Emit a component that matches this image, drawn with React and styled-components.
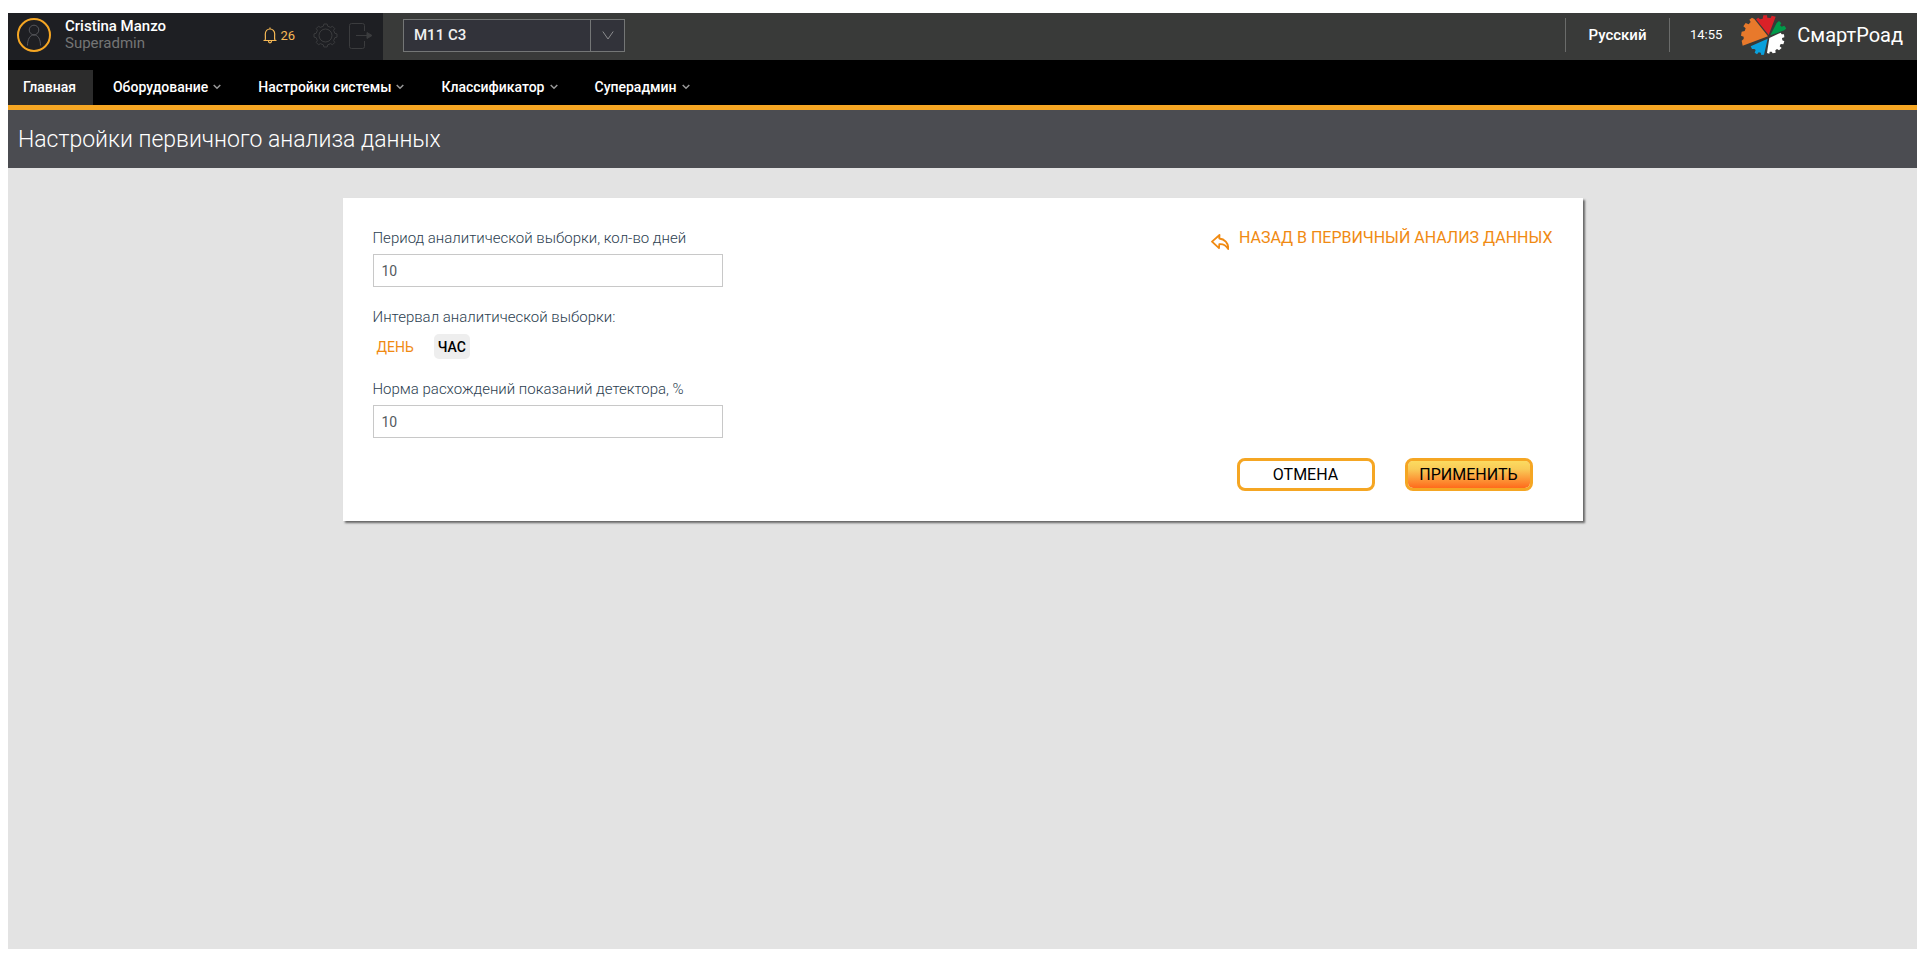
import React, { useState } from "react";
import styled, { createGlobalStyle } from "styled-components";

const GlobalStyle = createGlobalStyle`
  *, *::before, *::after { box-sizing: border-box; }
  html, body, #root { height: 100%; }
  body {
    margin: 0;
    background: #fff;
    font-family: Roboto, "Liberation Sans", sans-serif;
    font-size: 15px;
    line-height: 20px;
    color: #2c3e50;
  }
  button, input, select { font: inherit; margin: 0; }
`;

const Page = styled.div`
  min-height: 100%;
  padding: 13px 9px 12px 8px;
  display: flex;
  flex-direction: column;
`;

const TopBar = styled.header`
  display: flex;
  align-items: stretch;
  height: 47px;
  background: #393a39;
`;

const UserPanel = styled.div`
  flex: 0 0 375px;
  display: flex;
  align-items: center;
  padding: 0 10px 0 9px;
  background: #1e1f23;
`;

const Avatar = styled.span`
  display: flex;
  align-items: center;
  justify-content: center;
  width: 34px;
  height: 34px;
  margin: 0 14px 4px 0;
  border: 2px solid #f5a623;
  border-radius: 50%;
`;

const UserText = styled.div`
  flex: 1;
  display: flex;
  flex-direction: column;
  padding-bottom: 3px;
  line-height: 17px;
`;

const UserName = styled.span`
  font-size: 15px;
  font-weight: 500;
  color: #fff;
`;

const UserRole = styled.span`
  font-size: 15px;
  color: #747575;
`;

const IconButton = styled.button`
  display: flex;
  align-items: center;
  gap: 3px;
  padding: 0;
  margin: 0 0 2px ${(p) => p.$space}px;
  border: 0;
  background: none;
  font-size: 13px;
  line-height: 16px;
  color: ${(p) => p.$color};
  cursor: pointer;
`;

const ObjectPicker = styled.div`
  display: grid;
  grid-template-columns: 1fr 34px;
  align-self: flex-start;
  width: 222px;
  height: 33px;
  margin: 6px 0 0 20px;
  border: 1px solid #747676;
  background: #32333a;
`;

const PickerSelect = styled.select`
  grid-area: 1 / 1 / 2 / 3;
  appearance: none;
  padding: 0 44px 2px 10px;
  border: 0;
  background: transparent;
  color: #f0f0f0;
  font-size: 15px;
  font-weight: 500;
  outline: none;
`;

const PickerArrow = styled.span`
  grid-area: 1 / 2 / 2 / 3;
  display: flex;
  align-items: center;
  justify-content: center;
  border-left: 1px solid #747676;
  pointer-events: none;
`;

const TopRight = styled.div`
  flex: 1;
  display: flex;
  align-items: center;
  justify-content: flex-end;
  padding: 0 14px 4px 0;
  color: #fff;
`;

const LanguageButton = styled.button`
  width: 105px;
  height: 34px;
  padding: 0;
  border: solid #6a6b6a;
  border-width: 0 1px;
  background: none;
  color: #fff;
  font-weight: 500;
  cursor: pointer;
`;

const Clock = styled.time`
  padding: 0 18px 0 20px;
  font-size: 13px;
`;

const Brand = styled.a`
  display: flex;
  align-items: center;
  gap: 11px;
  color: #fff;
  font-size: 20px;
  line-height: 24px;
  text-decoration: none;
`;

const NavBar = styled.nav`
  display: flex;
  padding-top: 10px;
  border-bottom: 5px solid #f5a623;
  background: #000;
`;

const NavLink = styled.a`
  display: flex;
  align-items: center;
  gap: 5px;
  height: 35px;
  padding: 0 17px 2px ${(p) => (p.$active ? 15 : 20)}px;
  background: ${(p) => (p.$active ? "#2c2c2c" : "transparent")};
  color: #fff;
  font-size: 14px;
  font-weight: 500;
  text-decoration: none;
`;

const PageTitle = styled.h1`
  margin: 0;
  padding: 15px 10px 13px;
  background: #4b4c51;
  color: #fff;
  font-size: 23px;
  font-weight: 300;
  line-height: 30px;
`;

const Content = styled.main`
  flex: 1;
  padding-top: 30px;
  background: #e3e3e3;
`;

const Card = styled.form`
  width: 65%;
  max-width: 1240px;
  margin: 0 auto;
  padding: 30px;
  background: #fff;
  box-shadow: 1px 1px 2px 1px #777;
  box-shadow: 2px 2px 2px #666;
`;

const CardTop = styled.div`
  display: flex;
  justify-content: space-between;
  align-items: flex-start;
`;

const Fields = styled.div`
  width: 350px;
  display: flex;
  flex-direction: column;
  gap: 20px;
`;

const Field = styled.div`
  display: flex;
  flex-direction: column;
  gap: 6px;
`;

const fieldLabel = `
  font-size: 15px;
  font-weight: 300;
  white-space: nowrap;
`;

const Label = styled.label`${fieldLabel}`;
const GroupLabel = styled.span`${fieldLabel}`;

const TextInput = styled.input`
  height: 33px;
  padding: 0 8px;
  border: 1px solid #c8c8c8;
  background: #fff;
  color: #555a60;
  font-size: 14px;
  outline: none;
`;

const Switch = styled.div`
  display: flex;
  align-items: flex-end;
  gap: 16px;
  height: 26px;
`;

const SwitchButton = styled.button`
  height: 25px;
  padding: 0 4px;
  border: 0;
  border-radius: 5px;
  background: ${(p) => (p.$on ? "#eee" : "transparent")};
  color: ${(p) => (p.$on ? "#000" : "#f08a12")};
  font-size: 14px;
  font-weight: ${(p) => (p.$on ? 500 : 400)};
  cursor: pointer;
`;

const BackLink = styled.a`
  display: flex;
  gap: 10px;
  color: #f08a12;
  font-size: 16px;
  text-decoration: none;

  svg { margin-top: 6px; }
`;

const Actions = styled.div`
  display: flex;
  justify-content: flex-end;
  gap: 30px;
  padding: 20px 20px 0 0;
`;

const ActionButton = styled.button`
  width: ${(p) => p.$width}px;
  height: 33px;
  padding: 0;
  border: 3px solid #f5a623;
  border-radius: 8px;
  background: ${(p) => (p.$primary ? "linear-gradient(#fbdb60 0%, #f9cb57 30%, #ff6a1c 100%) padding-box" : "#fff")};
  color: #000;
  font-size: 16px;
  cursor: pointer;
`;

const GearLogo = () => (
  <svg width="46" height="41" viewBox="0 0 138 123" aria-hidden="true">
    <path fill="#e8792b" d="M84 67L43 15 36 11 28 17 32 24 26 31 17 27 10 37 17 43 14 51 5 53 3 65 11 68 11 75 5 80 8 95z" />
    <path fill="#da2128" d="M86 63L48 16 55 11 60 16 68 14 70 4 81 4 82 11 92 12 95 5 107 8z" />
    <path fill="#009a49" d="M91 64L110 27 117 21 124 28 120 34 125 38 133 35 139 43 133 49z" />
    <path fill="#fff" d="M88 72L122 56 125 61 132 61 133 70 126 72 127 79 133 82 130 91 122 90 119 97 125 102 117 109 111 105 106 109 107 116 98 118 95 113 89 113 88 119 81 117z" />
    <path fill="#0aa0dc" d="M83 74L72 122 64 123 62 116 56 115 51 121 44 116 47 108 43 105 36 105 32 97z" />
  </svg>
);

const PersonIcon = () => (
  <svg width="16" height="22" viewBox="0 0 16 22" fill="none" stroke="#55565a" aria-hidden="true">
    <circle cx="8" cy="6" r="4.8" />
    <path d="M1.500 21.500C1.500 15 4 11 8 11s6.500 4 6.500 10.500" />
  </svg>
);

const BellIcon = () => (
  <svg width="14" height="17" viewBox="0 0 14 17" fill="none" stroke="currentColor" strokeWidth="1.2" aria-hidden="true">
    <path d="M.5 13.500h13M2 13.300c.8-1 .3-4 .3-6C2.300 4 4.300 2 7 2s4.700 2 4.700 5c0 2-.5 5 .3 6.300M7 .5V2M5.500 14c0 2.500 3 2.500 3 0" />
  </svg>
);

const gearPoints = () => {
  const out = [];
  for (let i = 0; i < 8; i += 1) {
    [[-13, 9.6], [-8, 11.6], [8, 11.6], [13, 9.6]].forEach(([offset, r]) => {
      const a = ((i * 45 + offset) * Math.PI) / 180;
      out.push(`${(12.5 + r * Math.cos(a)).toFixed(2)},${(12.5 + r * Math.sin(a)).toFixed(2)}`);
    });
  }
  return out.join(" ");
};

const SettingsIcon = () => (
  <svg width="25" height="25" viewBox="0 0 25 25" fill="none" stroke="currentColor" strokeLinejoin="round" aria-hidden="true">
    <polygon points={gearPoints()} />
    <circle cx="12.5" cy="12.5" r="6.5" />
  </svg>
);

const LogoutIcon = () => (
  <svg width="25" height="26" viewBox="0 0 25 26" fill="none" stroke="currentColor" aria-hidden="true">
    <path d="M16.500 8V2.500a2 2 0 0 0-2-2h-11a2 2 0 0 0-2 2v21a2 2 0 0 0 2 2h11a2 2 0 0 0 2-2V18M8 12.500h13" />
    <path d="M19 9.500l5 3-5 3z" fill="currentColor" />
  </svg>
);

const NavChevron = () => (
  <svg width="8" height="6" viewBox="0 0 8 6" fill="none" stroke="#999" strokeWidth="1.5" aria-hidden="true">
    <path d="M.7 1L4 4.300 7.300 1" />
  </svg>
);

const PickerChevron = () => (
  <svg width="12" height="9" viewBox="0 0 12 9" fill="none" stroke="#8b8c8e" aria-hidden="true">
    <path d="M.8.500L6 8 11.200.5" />
  </svg>
);

const BackIcon = () => (
  <svg width="18" height="16" viewBox="0 0 18 16" fill="none" stroke="currentColor" strokeWidth="1.8" strokeLinejoin="round" aria-hidden="true">
    <path d="M8.500 1L1 7.700l7 6.500.3-4c3.500-.4 6.500 1 8.900 4.800.3-6-3.700-10-8.900-10.500z" />
  </svg>
);

const menu = [
  { title: "Главная", active: true },
  { title: "Оборудование" },
  { title: "Настройки системы" },
  { title: "Классификатор" },
  { title: "Суперадмин" },
];

export default function App() {
  const [period, setPeriod] = useState("10");
  const [norm, setNorm] = useState("10");
  const [interval, setInterval] = useState("ЧАС");

  return (
    <>
      <GlobalStyle />
      <Page>
        <TopBar>
          <UserPanel>
            <Avatar><PersonIcon /></Avatar>
            <UserText>
              <UserName>Cristina Manzo</UserName>
              <UserRole>Superadmin</UserRole>
            </UserText>
            <IconButton type="button" $space={0} $color="#f7b955"><BellIcon />26</IconButton>
            <IconButton type="button" $space={18} $color="#3b3c3e" aria-label="Настройки"><SettingsIcon /></IconButton>
            <IconButton type="button" $space={10} $color="#3b3c3e" aria-label="Выход"><LogoutIcon /></IconButton>
          </UserPanel>
          <ObjectPicker>
            <PickerSelect aria-label="Объект" defaultValue="M11 C3">
              <option>M11 C3</option>
            </PickerSelect>
            <PickerArrow><PickerChevron /></PickerArrow>
          </ObjectPicker>
          <TopRight>
            <LanguageButton type="button">Русский</LanguageButton>
            <Clock>14:55</Clock>
            <Brand href="#"><GearLogo />СмартРоад</Brand>
          </TopRight>
        </TopBar>
        <NavBar>
          {menu.map((item) => (
            <NavLink key={item.title} href="#" $active={item.active}>
              {item.title}
              {!item.active && <NavChevron />}
            </NavLink>
          ))}
        </NavBar>
        <PageTitle>Настройки первичного анализа данных</PageTitle>
        <Content>
          <Card onSubmit={(e) => e.preventDefault()}>
            <CardTop>
              <Fields>
                <Field>
                  <Label htmlFor="period">Период аналитической выборки, кол-во дней</Label>
                  <TextInput id="period" value={period} onChange={(e) => setPeriod(e.target.value)} />
                </Field>
                <Field>
                  <GroupLabel id="interval">Интервал аналитической выборки:</GroupLabel>
                  <Switch role="group" aria-labelledby="interval">
                    {["ДЕНЬ", "ЧАС"].map((name) => (
                      <SwitchButton
                        key={name}
                        type="button"
                        $on={interval === name}
                        aria-pressed={interval === name}
                        onClick={() => setInterval(name)}
                      >
                        {name}
                      </SwitchButton>
                    ))}
                  </Switch>
                </Field>
                <Field>
                  <Label htmlFor="norm">Норма расхождений показаний детектора, %</Label>
                  <TextInput id="norm" value={norm} onChange={(e) => setNorm(e.target.value)} />
                </Field>
              </Fields>
              <BackLink href="#"><BackIcon />НАЗАД В ПЕРВИЧНЫЙ АНАЛИЗ ДАННЫХ</BackLink>
            </CardTop>
            <Actions>
              <ActionButton type="button" $width={138}>ОТМЕНА</ActionButton>
              <ActionButton type="submit" $width={128} $primary>ПРИМЕНИТЬ</ActionButton>
            </Actions>
          </Card>
        </Content>
      </Page>
    </>
  );
}
